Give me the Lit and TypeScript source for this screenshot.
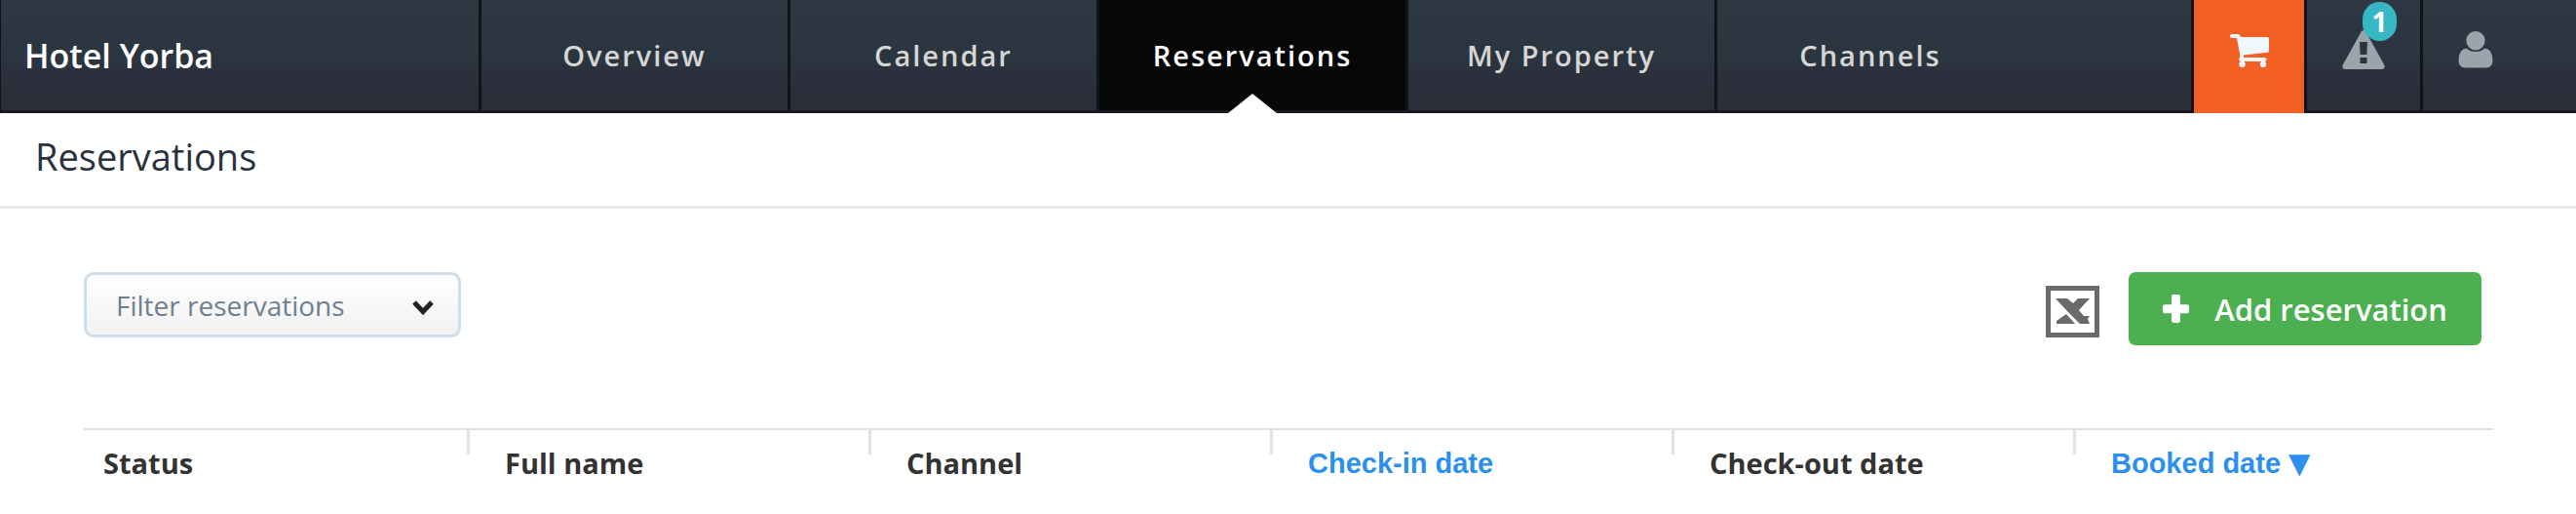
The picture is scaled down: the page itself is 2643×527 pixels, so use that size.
import { LitElement, html, css } from "lit";
import { customElement, state } from "lit/decorators.js";

interface Column {
  label: string;
  sortable?: boolean;
  sorted?: boolean;
}

@customElement("app-root")
export class AppRoot extends LitElement {
  static styles = css`
    :host {
      display: block;
      min-height: 100vh;
      background: #fff;
      color: #333;
      font-family: "Open Sans", sans-serif;
    }
    * {
      box-sizing: border-box;
    }
    a {
      color: inherit;
      text-decoration: none;
    }
    .topbar {
      display: flex;
      height: 116px;
      border-left: 1px solid #111417;
      background: linear-gradient(#2e3842, #2b3540 50%, #2b303c 68%, #292e39);
    }
    .brand,
    .tab,
    .tool {
      display: flex;
      align-items: center;
    }
    .brand,
    .tabs,
    .tool {
      border-bottom: 3px solid #171b21;
    }
    .brand {
      width: 490px;
      padding-left: 24px;
      color: #fff;
      font-size: 34px;
      font-weight: 600;
    }
    .tabs {
      display: flex;
      flex: 1;
    }
    .tab {
      position: relative;
      justify-content: center;
      width: 317px;
      border-left: 3px solid #111417;
      color: #d6d6d6;
      font-size: 29px;
      font-weight: 600;
      letter-spacing: 2px;
    }
    .tab.active {
      background: #070707;
      color: #fff;
    }
    .tab.active::after {
      content: "";
      position: absolute;
      left: 50%;
      bottom: -3px;
      margin-left: -25px;
      border: 25px solid transparent;
      border-top: 0;
      border-bottom: 20px solid #fff;
    }
    .tool {
      justify-content: center;
      width: 119px;
      padding-bottom: 12px;
      border-left: 3px solid #111417;
      color: #9ca3ad;
    }
    .tool.cart {
      width: 116px;
      border-bottom: 0;
      background: #f15f22;
      color: #f0f8ff;
    }
    .tool.user {
      width: 160px;
      padding-right: 49px;
    }
    .tool svg {
      display: block;
    }
    .alert {
      position: relative;
    }
    .badge {
      position: absolute;
      left: 21px;
      top: -29px;
      width: 35px;
      height: 40px;
      border-radius: 18px;
      background: #35b8c4;
      color: #fff;
      font-size: 28px;
      font-weight: 700;
      line-height: 40px;
      text-align: center;
    }
    .page-title {
      margin: 0;
      padding: 16px 36px 23px;
      border-bottom: 3px solid #e8e8ee;
      color: #28323e;
      font-size: 38px;
      font-weight: 400;
      line-height: 56px;
    }
    .content {
      padding: 65px 85px 0 86px;
    }
    .toolbar {
      display: flex;
      align-items: flex-start;
      margin-bottom: 85px;
    }
    .filter {
      display: grid;
      width: 387px;
    }
    .filter select,
    .filter svg {
      grid-area: 1 / 1;
    }
    .filter select {
      appearance: none;
      width: 100%;
      height: 67px;
      padding: 0 60px 0 30px;
      border: 3px solid #cfdde9;
      border-radius: 10px;
      background: linear-gradient(#fff, #f1f1f1);
      color: #6f7f8f;
      font: 400 28px "Open Sans", sans-serif;
    }
    .filter svg {
      align-self: center;
      justify-self: end;
      margin: 6px 28px 0 0;
      pointer-events: none;
    }
    .actions {
      display: flex;
      align-items: flex-start;
      gap: 30px;
      margin-left: auto;
      padding-right: 12px;
    }
    .export {
      display: block;
      margin: 14px 0 0;
      padding: 0;
      border: 0;
      background: none;
    }
    .export svg {
      display: block;
    }
    .add {
      display: flex;
      align-items: center;
      gap: 26px;
      height: 75px;
      padding: 0 35px;
      border: 0;
      border-radius: 7px;
      background: #4caf50;
      color: #fff;
      font: 600 31px "Open Sans", sans-serif;
    }
    table {
      width: 100%;
      border-collapse: separate;
      border-spacing: 0;
      table-layout: fixed;
      border-top: 2px solid #dde3e9;
    }
    th {
      padding: 14px 20px;
      background: linear-gradient(#dde3e9, #dde3e9) no-repeat right 16px top / 3px 25px;
      font-size: 29px;
      font-weight: 700;
      line-height: 40px;
      text-align: left;
      white-space: nowrap;
    }
    th:last-child {
      background: none;
    }
    .sort {
      display: block;
      padding: 0;
      border: 0;
      background: none;
      color: #2a8fee;
      font: 700 29px/40px "Liberation Sans", Arial, sans-serif;
    }
    .arrow {
      font-family: "DejaVu Sans", sans-serif;
    }
  `;

  @state() private active = "Reservations";

  private tabs = ["Overview", "Calendar", "Reservations", "My Property", "Channels"];

  private columns: Column[] = [
    { label: "Status" },
    { label: "Full name" },
    { label: "Channel" },
    { label: "Check-in date", sortable: true },
    { label: "Check-out date" },
    { label: "Booked date", sortable: true, sorted: true },
  ];

  render() {
    return html`
      <header class="topbar">
        <a class="brand" href="#">Hotel Yorba</a>
        <nav class="tabs">
          ${this.tabs.map(
            (tab) => html`<a
              class="tab ${tab === this.active ? "active" : ""}"
              href="#"
              @click=${() => (this.active = tab)}
              >${tab}</a
            >`
          )}
        </nav>
        <a class="tool cart" href="#" aria-label="Cart">
          <svg width="40" height="34" viewBox="0 0 40 34" fill="currentColor">
            <path
              d="M2 0h6.500q1.500 0 2 1.500l.5 1.500H38.500q1.500 0 1.500 1.500V17q0 1.500-1.500 1.700L14 21.600v2.400H35.500a2 2 0 0 1 0 4H12q-3-.3-2.800-2.500l1.300-2.500L7 4H2a2 2 0 0 1 0-4z"
            />
            <circle cx="12.500" cy="31" r="3.200" />
            <circle cx="34" cy="31" r="3.200" />
          </svg>
        </a>
        <a class="tool" href="#" aria-label="Alerts">
          <span class="alert">
            <svg width="44" height="40" viewBox="0 0 44 40">
              <path
                fill="currentColor"
                fill-rule="evenodd"
                d="M19.800 1.200Q22-1 24.200 1.200L43.500 36q1 3.500-2.500 4H3q-3.500-.5-2.500-4zM18 12l.6 13h6.800L26 12zM18.500 28v6h7v-6z"
              />
            </svg>
            <span class="badge">1</span>
          </span>
        </a>
        <a class="tool user" href="#" aria-label="Account">
          <svg width="36" height="38" viewBox="0 0 36 38" fill="currentColor">
            <circle cx="18" cy="9.700" r="9.700" />
            <path
              d="M8.500 17.500q4 3.500 9.500 3.500t9.500-3.500Q35 18 35.500 30q0 6.500-6 7.500h-23q-6-1-6-7.500Q1 18 8.500 17.500z"
            />
          </svg>
        </a>
      </header>

      <h1 class="page-title">Reservations</h1>

      <main class="content">
        <div class="toolbar">
          <div class="filter">
            <select aria-label="Filter reservations">
              <option>Filter reservations</option>
            </select>
            <svg width="22" height="15" viewBox="0 0 22 15">
              <path d="M2 2L11 11.500L20 2" fill="none" stroke="#222" stroke-width="5" />
            </svg>
          </div>
          <div class="actions">
            <button class="export" type="button" aria-label="Export to Excel">
              <svg width="55" height="53" viewBox="0 0 55 53">
                <rect x="2.500" y="2.500" width="50" height="48" fill="#fff" stroke="#6a6a6a" stroke-width="5" />
                <path
                  fill="#6a6a6a"
                  d="M10 13h12l6 5 5-5h12L34 25l5 6h6l-2 3 2 5H35L22 26zM21 29l9 10H11v-3z"
                />
              </svg>
            </button>
            <button class="add" type="button">
              <svg width="27" height="29" viewBox="0 0 27 27" preserveAspectRatio="none" fill="#fff">
                <path
                  d="M11 0h5q2 0 2 2v7.500h7q2 0 2 2v4.500q0 2-2 2h-7V25q0 2-2 2h-5q-2 0-2-2v-7H2q-2 0-2-2v-4.500q0-2 2-2h7V2q0-2 2-2z"
                />
              </svg>
              Add reservation
            </button>
          </div>
        </div>

        <table>
          <thead>
            <tr>
              ${this.columns.map(
                (c) => html`<th scope="col">
                  ${c.sortable
                    ? html`<button class="sort" type="button">
                        ${c.label} ${c.sorted ? html`<span class="arrow">▼</span>` : ""}
                      </button>`
                    : c.label}
                </th>`
              )}
            </tr>
          </thead>
        </table>
      </main>
    `;
  }
}
